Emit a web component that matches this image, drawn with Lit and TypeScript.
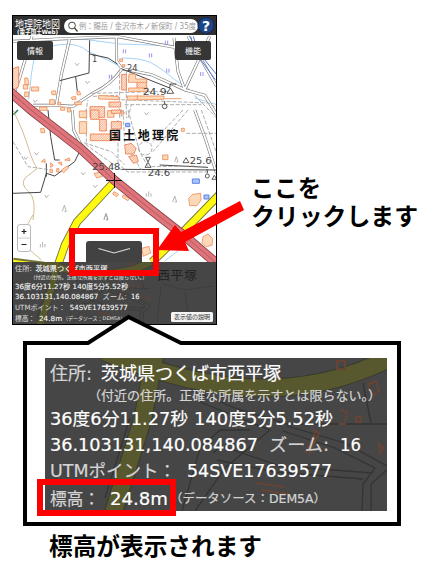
import { LitElement, html, svg, css } from "lit";
import { customElement, property } from "lit/decorators.js";

type Run = [x: number, width: number, text: string, kind?: string];

const ROWS: { y: number; size: number; runs: Run[] }[] = [
  { y: 22, size: 18, runs: [[5, 42, "住所:", "dim"], [56, 180, "茨城県つくば市西平塚"]] },
  { y: 41.5, size: 12.6, runs: [[43, 293, "（付近の住所。正確な所属を示すとは限らない。）", "dim"]] },
  { y: 66.5, size: 17.5, runs: [[5, 138, "36度6分11.27秒"], [149, 139, "140度5分5.52秒"]] },
  { y: 92.5, size: 17.5, runs: [[5, 208, "36.103131,140.084867"], [224, 60, "ズーム:", "dim"], [295, 21, "16"]] },
  { y: 119, size: 17.5, runs: [[5, 126, "UTMポイント：", "dim"], [142, 145, "54SVE17639577"]] },
  { y: 146.5, size: 17.5, runs: [[5, 50, "標高：", "dim"], [65, 58, "24.8m"]] },
  { y: 145, size: 12, runs: [[125, 156, "（データソース：DEM5A）", "dim"]] },
];

const FONT = css`
  :host {
    font-family: "DejaVu Sans", "Noto Sans CJK JP", sans-serif;
  }
`;

@customElement("location-info")
class LocationInfo extends LitElement {
  @property({ type: Number }) w = 342;
  @property({ type: Number }) h = 153;
  @property({ type: Number }) zoom = 1;
  static styles = [
    FONT,
    css`
      :host { display: block; }
      svg { display: block; }
      .back { fill: #464646; }
      .yellow { fill: none; stroke: #58582f; stroke-width: 17; }
      .edge { fill: none; stroke: #393a2d; stroke-width: 19; }
      .road { fill: none; stroke: #343434; stroke-width: 1.3; }
      .house { fill: none; stroke: #654435; stroke-width: 2; }
      text { fill: #fff; stroke: #fff; stroke-width: 0.2; }
      .dim { fill: #d4d4d4; stroke: #d4d4d4; }
      .place { fill: #222; stroke: #222; font-size: 31px; }
    `,
  ];
  render() {
    const vw = this.w / this.zoom;
    const vh = this.h / this.zoom;
    const bands = "M60 -6 Q150 30 218 30 T345 0 M110 -4 L98 60 L62 175";
    return html`<svg width=${this.w} height=${this.h} viewBox="0 0 ${vw} ${vh}">
      <rect class="back" width=${vw} height=${vh}></rect>
      <path class="edge" d=${bands} />
      <path class="yellow" d=${bands} />
      <path class="road" d="M146 32 L190 50 L242 66 H342 M150 42 L190 58 L225 72 L180 110 L150 153 M137 153 L155 90 L175 72 H205 M318 25 L326 65 M242 68 L300 85 L342 108 M238 73 L290 90 L330 110 L318 126 L317 153 M168 95 L176 88 L235 108 L328 115 M172 102 L230 114 L318 121 M342 112 L326 126 L326 153 M85 60 L60 140 M348 0 L375 55 L430 70 L500 60 M370 62 L360 150 M430 75 L440 150" />
      <path class="house" d="M292 3 h8 v8 h-8z M323 26 l8 -3 3 10 -7 4z M296 52 l6 2 -2 10 m-6 2 h7 M311 59 h5 v5 h-5z M268 72 l6 3 -10 22 m6 -22 -10 20 M210 125 l30 4 m-24 3 l28 4 M334 86 l5 4 -4 5z" />
      ${this.zoom < 1 ? svg`<text class="place" x="361" y="44" textLength="98">西平塚</text>` : ""}
      ${ROWS.map(({ y, size, runs }) =>
        runs.map(
          ([x, width, text, kind]) => svg`<text class=${kind ?? ""} x=${x} y=${y} font-size=${size}
            textLength=${width} lengthAdjust="spacingAndGlyphs">${text}</text>`
        )
      )}
    </svg>`;
  }
}

@customElement("town-map")
class TownMap extends LitElement {
  static styles = css`
    :host { display: block; }
    svg { display: block; }
    path { fill: none; }
    .case { stroke: #777; stroke-width: 9; }
    .lane { stroke: #fff; stroke-width: 5.5; }
    .line { stroke: #444; stroke-width: 3; }
    .dash { stroke: #999; stroke-width: 2.4; stroke-dasharray: 12 5; }
    .stream { stroke: #a5d2f5; stroke-width: 3; }
    .canal { stroke: #5577d8; stroke-width: 3; }
    .field { stroke: #8080e8; stroke-width: 2.5; }
    .tan { stroke: #c9b27c; stroke-width: 2.5; }
    .sym { stroke: #999; stroke-width: 2.2; }
    .dark { stroke: #333; stroke-width: 2.4; }
    .house { stroke: #ee8a55; fill: #fcd9b8; stroke-width: 2.4; }
    .block { stroke: #ee7d50; fill: url(#hatch); stroke-width: 2.6; }
    .pool { stroke: #5b83e6; fill: #a9c4fa; stroke-width: 3; }
    .pine { stroke: #217848; stroke-width: 4; }
    .redcase { stroke: #844449; stroke-width: 9.6; }
    .red { stroke: #e0747b; stroke-width: 8; }
    .redmid { stroke: #a8535a; stroke-width: 0.8; }
    .yelcase { stroke: #77773c; stroke-width: 8.4; }
    .yellow { stroke: #fffa10; stroke-width: 6.6; }
    .cross { stroke: #111; stroke-width: 1; }
    text { font-family: "DejaVu Sans", "Noto Sans CJK JP", sans-serif; fill: #444; font-size: 25px; }
    .place { fill: #111; font-size: 36px; font-weight: 700; }
  `;
  render() {
    const north = "M13 100 L170 92 L330 86 L500 118 M185 92 L160 200 L145 292 M72 85 L35 210 L20 250 M325 85 L326 160 L342 182 Q310 230 255 255 L195 295 L140 292 L75 292 M342 182 L430 200 L530 245 L570 160 L605 85 M498 90 L510 190 L530 245 L590 262 L626 320 M540 85 L626 235";
    const south = "M193 0 L197 60 L217 100 L230 118 M560 0 L590 80 L626 190";
    return html`<svg width="203" height="290" viewBox="13 35 203 290">
      <defs>
        <pattern id="hatch" width="5" height="5" patternUnits="userSpaceOnUse" patternTransform="rotate(45)">
          <rect width="5" height="5" fill="#fff0e2"></rect><rect width="2" height="5" fill="#f5a37c"></rect>
        </pattern>
      </defs>
      <rect x="13" y="35" width="203" height="290" fill="#fff"></rect>
      <g transform="translate(8 8) scale(.33333)">
        <path class="stream" d="M80 140 L70 200 L62 275 M90 128 Q190 88 240 130 Q290 150 345 180 M200 90 L335 108 L460 112 M340 150 Q400 150 430 165 T500 215 L545 245 M560 270 L626 290" />
        <path class="case" d=${north} />
        <path class="lane" d=${north} />
        <path class="canal" d="M548 85 L560 130 L622 215 M556 85 L568 128 L626 200" />
        <path class="line" d="M245 97 L243 195 L155 218 M245 138 L300 150 L328 168 M203 207 L208 250 M340 182 L485 240 L487 228 L505 228" />
        <path class="field" d="M346 124v12m7-12v12 M424 136v12m7-12v12 M472 98v12m7-12v12 M476 182v12m7-12v12 M578 192v12m7-12v12 M304 200v12m7-12v12" />
        <path class="sym" d="M202 165l5 8 7-8 M233 219l5 8 7-8 M76 275l5 8 7-8 M410 313l5 8 7-8" />
        <path class="dash" d="M250 256 L480 250 M255 265 L330 262 M340 275 L600 285 L626 300 M350 290 L580 290 M230 330 L240 275 M335 330 V190 M355 190 V330 M360 330 L370 290 M560 262 L626 330" />
        <path class="block" d="M341 199h14v47h-14z M387 218h29v30h-29z M246 296h44v32h-44z M303 282h35v15h-35z M14 182l18-6v60l-18 12z" />
        <path class="house" d="M363 198h20v15h33v10h-55z M362 240h58v10h-58z M272 262l60 4v9l-60-2z M358 264l110 0v10l-110 2z M470 272h50 M298 308h20v20h-20z M343 175h8v-5h-8z M335 153h9v7h-9z M50 210l9 0 4 20h-12z M70 237h22v12h-22z M46 230h13v13h-13z M130 250l12 -2 3 12h-13z M125 275h14v14h-14z M190 268l12-3 2 9h-12z M206 252l9-2 3 10-10 1z M150 283h8v8h-8z M50 252h12v14h-12z M36 275h14v12h-14z M95 297h22v10h-22z M200 282h20v8h-20z M158 298h12v9h-12z M178 300h9v12h-9z M340 305l10 10 -10 10z M388 260v15" />
        <path class="dark" d="M470 289v-10 M463 295a7 7 0 1 0 14 0a7 7 0 1 0-14 0 M477 256l10-16 10 16z" />
        <path class="pine" d="M16 320 L30 306" />
        <text x="252" y="162">1</text><text x="357" y="190" textLength="32">24</text><text x="404" y="262" textLength="72" lengthAdjust="spacingAndGlyphs">24.9</text>
      </g>
      <g transform="translate(8 110) scale(.33333)">
        <path class="tan" d="M15 0 Q45 60 60 110 T88 175 L50 205 Q38 225 62 245 T75 330" />
        <path class="case" d=${south} />
        <path class="lane" d=${south} />
        <path class="line" d="M120 0 L128 80 L140 150 L155 150 M218 118 L200 155 L140 198 L115 190 L98 247 L15 250 M115 160V200 M455 165 L600 172 M340 178 L626 180" />
        <path class="dash" d="M235 0 V105 L340 180 M228 98 L310 125 L350 165 M345 0 L350 100 L400 180 M360 0 L395 125 L420 170 M540 0 L435 125 M525 0 L430 100 M340 170 L360 186 L600 186 M535 70 H626 M15 95 L60 170 L130 180 M330 30 V160 M580 0 L626 130 M430 170 L560 168" />
        <path class="dash" d="M392 115a20 20 0 1 0 40 0a20 20 0 1 0-40 0" />
        <path class="house" d="M214 35h22v35h-22z M214 3h22v20h-22z M98 55l10 0 3 13h-12z M258 190l18-3 8 12-18 5z M318 245l14 8-6 7-12-8z M345 255l20 10-5 7-17-10z M464 135h16v14h-16z M542 265l12-12 24-3 1 20-12 17-22 0z M100 155l10-8 2 10z M128 158l8 8-8 6z M150 158l10-2 2 10z M170 150l14-6 2 8z M160 180l18-12 4 6-15 14z M520 55h9v9h-9z M126 178h7v10h-7z M146 176h7v10h-7z" />
        <path class="block" d="M248 0h25v28h-25z M275 28h20v35h-20z M247 72h85v20h-85z M310 35h30v22h-30z M350 105l20-5 14 15-6 17-25 0z M362 140l23-5 6 20-15 5z M310 0h28v10h-28z" />
        <path class="pool" d="M553 207h21v13h-21z M588 255h15v12h-15z M353 40h12v10h-12z" />
        <path class="sym" d="M48 140l5 8 7-8 M80 127l5 8 7-8 M220 187l5 8 7-8 M256 225l5 8 7-8 M110 255l5 8 7-8 M163 304l6-18 6 18h-6 M288 328l6-18 6 18h-6 M494 276l6-18 6 18h-6 M500 156l5-16 5 16h-5 M415 260v-10m7 10v-16m7 16v-10" />
        <path class="dark" d="M525 158l9-15 9 15z M411 172l9-15 9 15z M413 142h14l-7 14z M592 198a6 6 0 1 0 12 0a6 6 0 1 0-12 0 M598 190v-12 M612 208l7-12 7 12z" />
      </g>
      <g transform="translate(8 215) scale(.33333)">
        <path class="tan" d="M75 0 L52 40 M60 100 L100 135" />
        <path class="sym" d="M97 97v-10m7 10v-16m7 16v-10 M288 15l6-18 6 18h-6" />
        <path class="house" d="M401 100l22-6 5 20-22 10z M585 65l15-8 14 14-2 20-18 4-12-12z M555 25l10 3-3 6z M585 125l20 0 5 8-20 0z M466 17l14 2-3 9-12-2z" />
        <path class="stream" d="M470 138 L520 100" />
      </g>
      <path class="yelcase" d="M114 182 L77 222 L65 245 L58 265 M220 194 L186 229 L152 262 M13 262 L44 266" />
      <path class="yellow" d="M114 182 L77 222 L65 245 L58 265 M220 194 L186 229 L152 262 M13 263 L44 267" />
      <path class="redcase" d="M8 90 L31 110 L81 149 L114 180 L150 209 L187 238 L222 268" />
      <path class="red" d="M8 90 L31 110 L81 149 L114 180 L150 209 L187 238 L222 268" />
      <path class="redmid" d="M8 90 L31 110 L81 149 L114 180 L150 209 L187 238 L222 268" />
      <path class="cross" d="M106 180.5H122 M114.5 173V188" />
      <g transform="translate(8 110) scale(.33333)">
        <text x="253" y="180" textLength="84" lengthAdjust="spacingAndGlyphs">25.48</text>
        <text x="419" y="198" textLength="68" lengthAdjust="spacingAndGlyphs">24.6</text>
        <text x="545" y="162" textLength="66" lengthAdjust="spacingAndGlyphs">25.6</text>
        <text class="place" x="303" y="91" textLength="208">国土地理院</text>
      </g>
    </svg>`;
  }
}

@customElement("app-root")
class AppRoot extends LitElement {
  static styles = [
    FONT,
    css`
      :host { display: block; width: 443px; height: 579px; background: #fff; overflow: hidden; position: relative; }
      * { box-sizing: border-box; }
      svg { display: block; overflow: visible; }
      .page { display: flex; flex-direction: column; padding: 15px 0 0 12px; }
      .top { display: flex; height: 310px; }
      .phone { width: 205px; border: 1px solid #000; background: #333; display: flex; flex-direction: column; }
      .bar { height: 19px; background: #303030; display: flex; align-items: center; padding-left: 2px; gap: 4px; }
      .search { width: 134px; height: 14px; border-radius: 7px; background: #fff; }
      .help { margin-left: -4px; }
      .stage { display: grid; height: 289px; overflow: hidden; }
      .stage > * { grid-area: 1 / 1; }
      .ui { display: flex; flex-direction: column; z-index: 1; }
      .tools { display: flex; justify-content: space-between; padding: 6px 5px 0 4px; height: 189px; align-items: flex-start; }
      .tool { width: 36px; height: 19px; border-radius: 2px; background: #363636; }
      .mid { display: grid; grid-template-columns: 14px 56px; column-gap: 55px; height: 38px; padding-left: 4px; }
      .zoom { width: 14px; height: 28px; border-radius: 3px; border: 1px solid #bbb; background: #fff; }
      .tab { margin-top: 17px; height: 21px; width: 56px; background: #424242; border-radius: 3px 3px 0 0; }
      .info { position: relative; }
      .explain { position: absolute; right: 3px; bottom: 3px; width: 42px; height: 10px; background: #f4f4f4; border-radius: 1.5px; }
      .hint { padding: 158px 0 0 34px; }
      .callout { margin: 33px 0 0 33px; width: 342px; height: 153px; }
      .caption { margin: 19px 0 0 37px; }
      .over { position: absolute; left: 0; top: 0; z-index: 2; }
    `,
  ];
  render() {
    const fit = (text: string, x: number, y: number, w: number, size: number, fill: string, weight = 400) =>
      svg`<text x=${x} y=${y} font-size=${size} fill=${fill} font-weight=${weight} textLength=${w} lengthAdjust="spacingAndGlyphs">${text}</text>`;
    return html`
      <div class="page">
        <div class="top">
          <div class="phone">
            <div class="bar">
              <svg width="45" height="19">${fit("地理院地図", 0, 11.5, 45, 9.8, "#fff")}${fit("(電子国土Web)", 2, 17.8, 41, 5.8, "#fff", 700)}</svg>
              <div class="search">
                <svg width="134" height="14">
                  <circle cx="8" cy="6.5" r="3.4" fill="none" stroke="#444"></circle>
                  <path d="M10.5 9L13.5 12.5" stroke="#444" stroke-width="1.3" />
                  ${fit("例：賜岳 / 金沢市木ノ新保町 / 35度", 15, 10.2, 117, 8.2, "#999")}
                </svg>
              </div>
              <svg class="help" width="17" height="17">
                <circle cx="8" cy="8.5" r="8" fill="#1c4587" stroke="#15284d"></circle>
                <text x="8" y="13.5" text-anchor="middle" font-size="14" font-weight="700" fill="#fff">?</text>
              </svg>
            </div>
            <div class="stage">
              <town-map></town-map>
              <div class="ui">
                <div class="tools">
                  <div class="tool"><svg width="36" height="19">${fit("情報", 10, 12.5, 16, 8, "#fff")}</svg></div>
                  <div class="tool"><svg width="36" height="19">${fit("機能", 10, 12.5, 16, 8, "#fff")}</svg></div>
                </div>
                <div class="mid">
                  <div class="zoom"><svg width="12" height="26"><path d="M3.5 6.5h5M6 4v5M3.5 19.5h5" stroke="#222" stroke-width="1.2" /><path d="M0 13h12" stroke="#ccc" /></svg></div>
                  <div class="tab"><svg width="56" height="21"><path d="M12.5 7.5L28 12L44 7.5" fill="none" stroke="#ddd" stroke-width="1.2" /></svg></div>
                </div>
                <div class="info">
                  <location-info w="203" h="63" zoom="0.4"></location-info>
                  <div class="explain"><svg width="42" height="10">${fit("表示値の説明", 3, 7.3, 36, 6, "#333")}</svg></div>
                </div>
              </div>
            </div>
          </div>
          <div class="hint">
            <svg width="170" height="60">${fit("ここを", 0, 24, 70, 24, "#000", 700)}${fit("クリックします", 0, 52, 167, 24, "#000", 700)}</svg>
          </div>
        </div>
        <location-info class="callout"></location-info>
        <div class="caption"><svg width="214" height="34">${fit("標高が表示されます", 0, 25, 213, 24, "#000", 700)}</svg></div>
      </div>
      <svg class="over" width="443" height="579">
        <path d="M86 345L128.5 317L183 345Z" fill="#fff" />
        <path d="M25 343H88L128.5 317L181 343H399V524H25Z" fill="none" stroke="#000" stroke-width="4" />
        <rect x="72" y="231" width="84" height="42" fill="none" stroke="#f00" stroke-width="6"></rect>
        <rect x="40" y="482" width="133" height="31" fill="none" stroke="#f00" stroke-width="6"></rect>
        <path d="M240 201L244 210L185 242L189 251L157 250L175 225L181 232Z" fill="#f00" />
      </svg>`;
  }
}
